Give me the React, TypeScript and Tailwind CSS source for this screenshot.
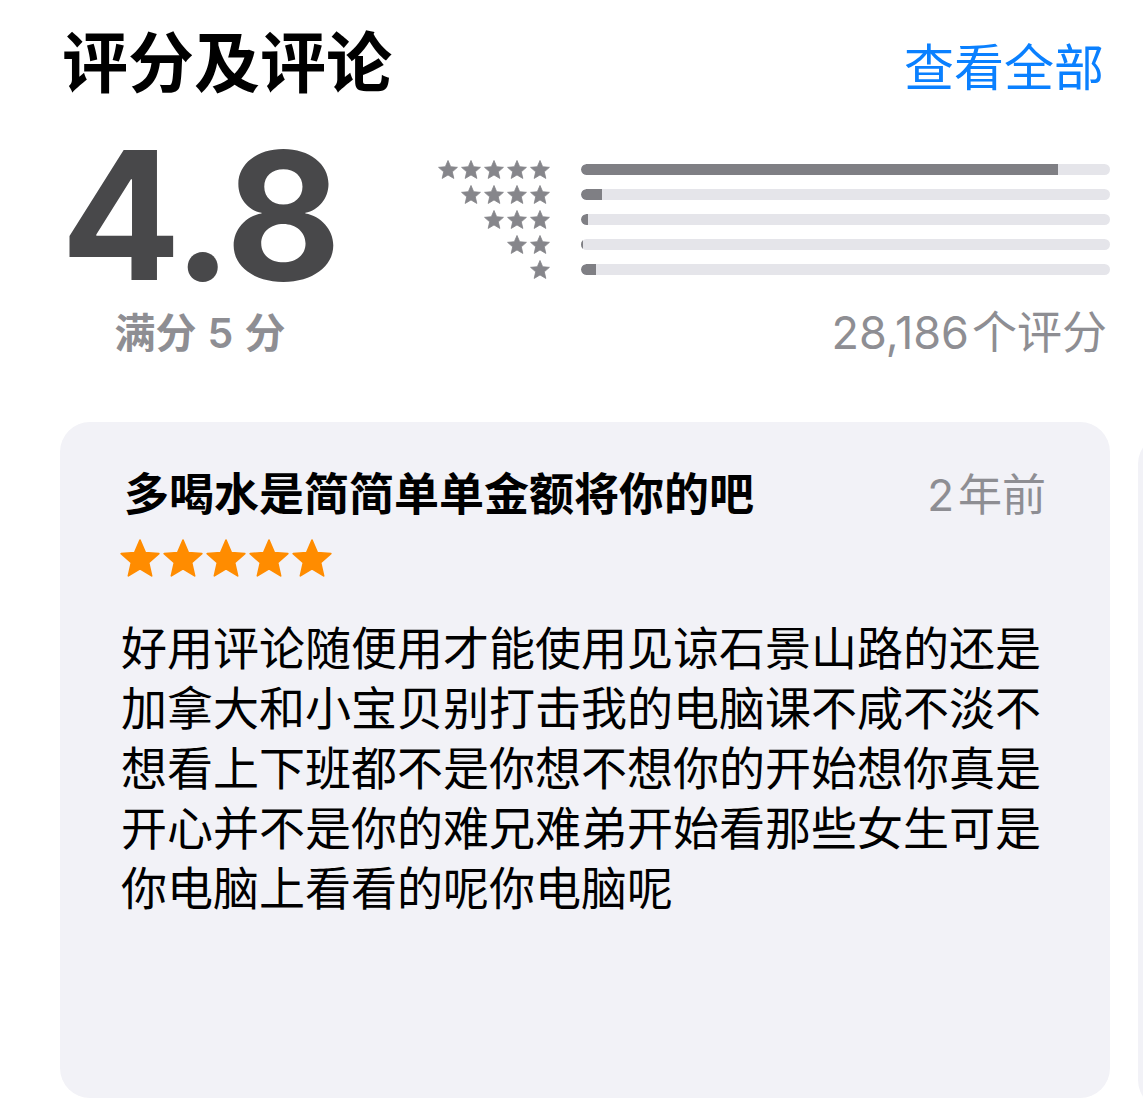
import React from "react";

const CJK = { fontFamily: '"Noto Sans CJK SC", "Noto Sans", sans-serif' };
const NUM = { fontFamily: 'Inter, "Noto Sans CJK SC", sans-serif' };

const STAR_PATH =
  "M12 0.6 L15.23 8.15 L23.41 8.89 L17.23 14.3 L19.05 22.31 L12 18.1 L4.95 22.31 L6.77 14.3 L0.59 8.89 L8.77 8.15 Z";

function Star({ className, color }: { className: string; color: string }) {
  return (
    <svg viewBox="0 0 24 23" className={className}>
      <path d={STAR_PATH} fill={color} stroke={color} strokeWidth={1} strokeLinejoin="round" />
    </svg>
  );
}

const distribution = [
  { stars: 5, pct: 90.2 },
  { stars: 4, pct: 4 },
  { stars: 3, pct: 1.3 },
  { stars: 2, pct: 0.4 },
  { stars: 1, pct: 2.8 },
];

const bodyLines = [
  "好用评论随便用才能使用见谅石景山路的还是",
  "加拿大和小宝贝别打击我的电脑课不咸不淡不",
  "想看上下班都不是你想不想你的开始想你真是",
  "开心并不是你的难兄难弟开始看那些女生可是",
  "你电脑上看看的呢你电脑呢",
];

export default function App() {
  return (
    <div className="h-[1116px] w-[1143px] overflow-hidden bg-white" style={CJK}>
      <div className="pl-[60px] pt-[8px]">
        {/* Header */}
        <div className="flex w-[1050px] items-center justify-between">
          <h2 className="pl-[2px] text-[66px] font-bold leading-[88px] text-black">评分及评论</h2>
          <span className="pr-[6px] pt-[12px] text-[50px] leading-[88px] text-[#0a80ff]">查看全部</span>
        </div>

        {/* Summary */}
        <div className="mt-[38px] flex w-[1050px]">
          <div className="flex w-[280px] flex-col items-center">
            <div
              className="text-[178px] font-bold leading-[140px] tracking-[-2px] text-[#48484a]"
              style={NUM}
            >
              4.8
            </div>
            <div className="mt-[20px] text-[41px] font-semibold leading-[48px] text-[#8e8e93]">
              满分<span className="mx-[11px]" style={NUM}>5</span>分
            </div>
          </div>

          <div className="mt-[11px] flex flex-1 flex-col">
            <div className="flex flex-col">
              {distribution.map((row) => (
                <div key={row.stars} className="flex h-[25px] items-center">
                  <div className="flex w-[210px] justify-end gap-[3px]">
                    {Array.from({ length: row.stars }).map((_, i) => (
                      <Star key={i} className="h-[19px] w-[20px]" color="#86868b" />
                    ))}
                  </div>
                  <div className="ml-[31px] h-[11px] flex-1 overflow-hidden rounded-full bg-[#e5e5ea]">
                    <div
                      className="h-full rounded-l-full bg-[#7f7f84]"
                      style={{ width: `${row.pct}%`, minWidth: "2px" }}
                    />
                  </div>
                </div>
              ))}
            </div>
            <div
              className="mt-[25px] pr-[3px] text-right text-[45px] leading-[52px] text-[#8e8e93]"
              style={NUM}
            >
              28,186<span className="ml-[3px]">个评分</span>
            </div>
          </div>
        </div>

        {/* Review cards */}
        <div className="mt-[63px] flex gap-[28px]">
          <div className="h-[676px] w-[1050px] shrink-0 rounded-[30px] bg-[#f2f2f7] px-[64px] pt-[40px]">
            <div className="flex items-baseline justify-between">
              <div className="text-[45px] font-bold leading-[60px] text-black">多喝水是简简单单金额将你的吧</div>
              <div className="text-[44px] leading-[60px] text-[#8e8e93]" style={NUM}>
                2<span className="ml-[4px]">年前</span>
              </div>
            </div>
            <div className="-ml-[4px] mt-[14px] flex gap-[3px]">
              {Array.from({ length: 5 }).map((_, i) => (
                <Star key={i} className="h-[38px] w-[40px]" color="#ff8c00" />
              ))}
            </div>
            <div className="-ml-[3px] mt-[38px] text-[46px] leading-[60px] text-black">
              {bodyLines.map((l) => (
                <div key={l} className="whitespace-nowrap">
                  {l}
                </div>
              ))}
            </div>
          </div>
          <div className="mt-[12px] h-[676px] w-[1050px] shrink-0 rounded-[30px] bg-[#f2f2f7]" />
        </div>
      </div>
    </div>
  );
}
